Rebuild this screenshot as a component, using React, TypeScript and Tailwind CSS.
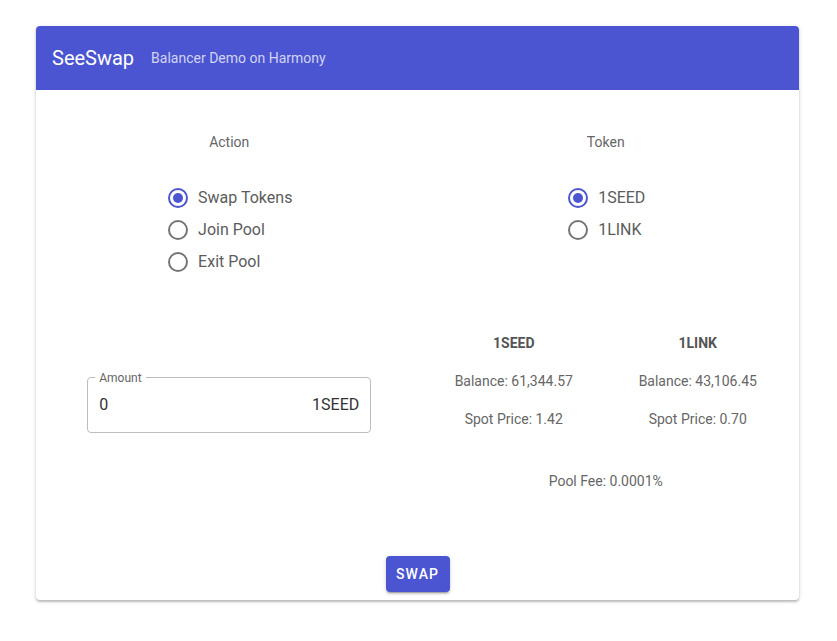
import React, { useState } from 'react'

const ACTIONS = ['Swap Tokens', 'Join Pool', 'Exit Pool']
const TOKENS = ['1SEED', '1LINK']

const STATS = [
  { name: '1SEED', balance: '61,344.57', price: '1.42' },
  { name: '1LINK', balance: '43,106.45', price: '0.70' },
]

function RadioIcon({ checked }: { checked: boolean }) {
  return (
    <svg width="20" height="20" viewBox="0 0 20 20" className="shrink-0">
      <circle
        cx="10"
        cy="10"
        r="9"
        fill="none"
        stroke={checked ? '#4b55d1' : '#757575'}
        strokeWidth="2"
      />
      {checked && <circle cx="10" cy="10" r="5" fill="#4b55d1" />}
    </svg>
  )
}

function RadioList({
  options,
  value,
  onChange,
}: {
  options: string[]
  value: string
  onChange: (v: string) => void
}) {
  return (
    <div className="flex flex-col pl-[2px]">
      {options.map((opt) => (
        <button
          key={opt}
          type="button"
          onClick={() => onChange(opt)}
          className="flex h-8 items-center gap-[10px] text-left text-base text-[#5c5c5c]"
        >
          <RadioIcon checked={value === opt} />
          <span>{opt}</span>
        </button>
      ))}
    </div>
  )
}

export default function App() {
  const [action, setAction] = useState('Swap Tokens')
  const [token, setToken] = useState('1SEED')
  const [amount, setAmount] = useState('0')

  return (
    <div
      className="min-h-[641px] w-[837px] bg-white pt-[26px]"
      style={{ fontFamily: 'Roboto, "Liberation Sans", sans-serif' }}
    >
      <div className="ml-[36px] w-[763px] overflow-hidden rounded bg-white shadow-[0_2px_2px_rgba(0,0,0,0.2),0_1px_5px_rgba(0,0,0,0.12)]">
        <div className="flex h-16 items-center gap-[17px] bg-[#4b55d1] px-4">
          <span className="text-xl text-white">SeeSwap</span>
          <span className="text-sm text-white/75">Balancer Demo on Harmony</span>
        </div>

        <div className="grid grid-cols-2 px-[5px] pt-[42px]">
          <div className="flex flex-col items-center">
            <div className="text-sm leading-5 text-[#666]">Action</div>
            <div className="mt-[30px]">
              <RadioList options={ACTIONS} value={action} onChange={setAction} />
            </div>
          </div>
          <div className="flex flex-col items-center">
            <div className="text-sm leading-5 text-[#666]">Token</div>
            <div className="mt-[30px]">
              <RadioList options={TOKENS} value={token} onChange={setToken} />
            </div>
          </div>
        </div>

        <div className="mt-[55px] grid grid-cols-2 px-[5px]">
          <div className="flex justify-center pt-[44px]">
            <div className="relative h-[56px] w-[284px] rounded border border-[#bdbdbd]">
              <span className="absolute left-[7px] top-[-7px] bg-white px-1 text-xs leading-[14px] text-[#666]">
                Amount
              </span>
              <div className="flex h-full items-center px-[11px] text-base text-[#333]">
                <input
                  value={amount}
                  onChange={(e) => setAmount(e.target.value)}
                  className="min-w-0 flex-1 bg-transparent outline-none"
                />
                <span>{token}</span>
              </div>
            </div>
          </div>

          <div className="flex flex-col items-center">
            <div className="grid w-[368px] grid-cols-2 text-sm text-[#666]">
              {STATS.map((s) => (
                <div key={s.name} className="flex flex-col items-center gap-[18px] leading-5">
                  <div className="font-bold text-[#555]">{s.name}</div>
                  <div>Balance: {s.balance}</div>
                  <div>Spot Price: {s.price}</div>
                </div>
              ))}
            </div>
            <div className="mt-[42px] text-sm leading-5 text-[#666]">Pool Fee: 0.0001%</div>
          </div>
        </div>

        <div className="flex justify-center pb-2 pt-[65px]">
          <button
            type="button"
            className="h-9 w-16 rounded bg-[#4b55d1] text-sm font-medium tracking-[0.08em] text-white shadow-[0_3px_1px_-2px_rgba(0,0,0,0.2),0_2px_2px_rgba(0,0,0,0.14),0_1px_5px_rgba(0,0,0,0.12)]"
          >
            SWAP
          </button>
        </div>
      </div>
    </div>
  )
}
